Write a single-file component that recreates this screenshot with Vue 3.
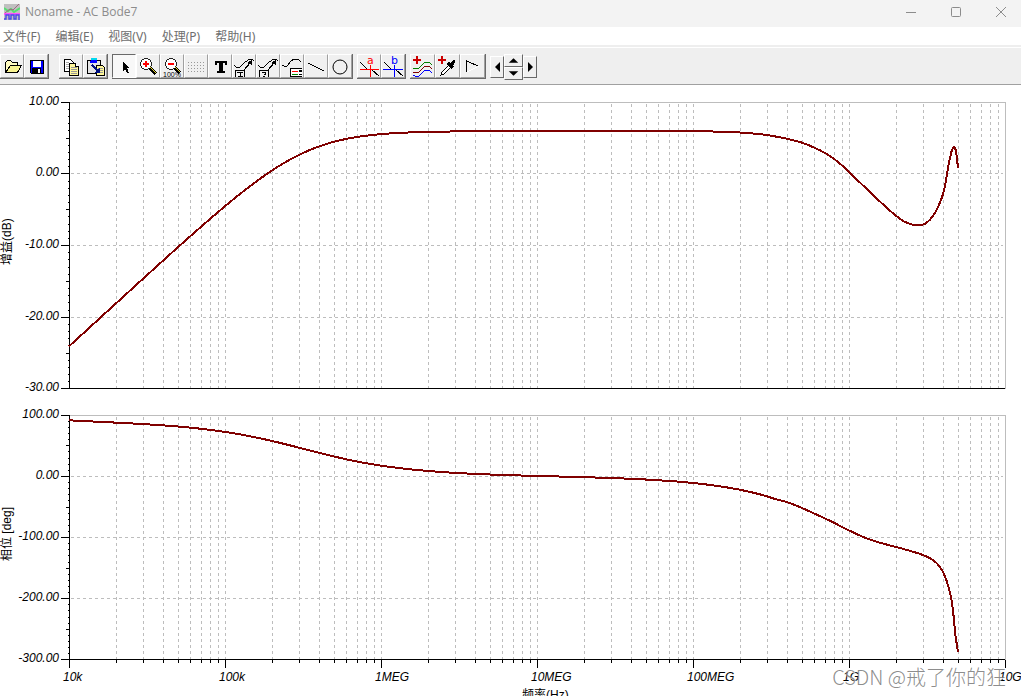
<script setup>
const menus = ['文件(F)', '编辑(E)', '视图(V)', '处理(P)', '帮助(H)']

const LEFT = 69
const RIGHT = 1005
const DECADE = 156
const decadeLabels = ['10k', '100k', '1MEG', '10MEG', '100MEG', '1G', '10G']

const decades = decadeLabels.map((label, i) => ({ label, x: LEFT + i * DECADE }))
const minorX = []
for (let d = 0; d < 6; d++) {
  for (let n = 2; n < 10; n++) {
    minorX.push(Math.round(LEFT + DECADE * (d + Math.log10(n))))
  }
}
const gridX = [...minorX, ...decades.slice(1, -1).map((d) => d.x)]

function makeAxis(top, bottom, max, step) {
  const labels = []
  const ticks = []
  for (let i = 0; i <= 40; i++) {
    const y = Math.round(top - 0.2 + ((bottom - top + 0.6) * i) / 40)
    const size = i % 10 === 0 ? 8 : i % 5 === 0 ? 3 : 1
    ticks.push({ y, size })
    if (i % 10 === 0) labels.push({ y, text: (max - (step * i) / 10).toFixed(2) })
  }
  return { top, bottom, labels, ticks }
}

function smooth(points) {
  let d = `M${points[0][0]} ${points[0][1]}`
  for (let i = 0; i < points.length - 1; i++) {
    const a = points[Math.max(i - 1, 0)]
    const b = points[i]
    const c = points[i + 1]
    const e = points[Math.min(i + 2, points.length - 1)]
    const slope = (p, q) => (q[1] - p[1]) / (q[0] - p[0])
    const h = (c[0] - b[0]) / 3
    const y1 = b[1] + slope(a, c) * h
    const y2 = c[1] - slope(b, e) * h
    d += `C${(b[0] + h).toFixed(1)} ${y1.toFixed(1)} ${(c[0] - h).toFixed(1)} ${y2.toFixed(1)} ${c[0]} ${c[1]}`
  }
  return d
}

// First-order high-pass section, then the sampled roll-off and resonance.
const gain = []
for (let x = LEFT; x <= 640; x += 12) {
  const f = 10 ** ((x - LEFT) / DECADE)
  const db = 6 - 10 * Math.log10(1 + (32 / f) ** 2)
  gain.push([x, 174 - db * 7.15])
}
gain.push(
  [660, 131.1], [700, 131.3], [730, 132], [750, 133.2], [765, 134.8], [780, 137.3], [788, 139],
  [802, 142.7], [814, 147.5], [826, 153.5], [835, 159.6], [842, 165.4], [849, 172.2], [857, 179.8],
  [867, 189.2], [877, 198.8], [887, 208], [896, 215.8], [904, 221.4], [912, 224.6], [917, 225.2],
  [923, 224.6], [928, 221.6], [933, 216], [937, 209], [941, 200], [944, 190], [946, 180],
  [948, 168], [950, 158], [952, 150], [954, 147], [956, 151], [957, 159], [958, 168]
)

// High-pass lead minus a constant delay, then the sampled tail.
const phase = []
for (let x = LEFT; x <= 780; x += 12) {
  const f = 10 ** ((x - LEFT) / DECADE)
  const lead = (Math.atan(32 / f) * 180) / Math.PI + 3.8 * Math.exp(-(x - LEFT) / 60)
  phase.push([x, 476.4 - (lead - f * 0.0011) * 0.61])
}
phase.push(
  [788, 502.4], [802, 508], [814, 513.4], [826, 519], [835, 523.2], [842, 527], [849, 530.4],
  [863, 536.9], [877, 541.9], [896, 547], [912, 551.4], [923, 555], [930, 558.2], [937, 563.4],
  [943, 572], [947, 582], [950, 593], [952, 603], [954, 620], [955, 632], [958, 652]
)

const plots = [
  { ...makeAxis(102, 388, 10, 10), curve: smooth(gain), title: '增益(dB)', titleY: 265 },
  { ...makeAxis(415, 659, 100, 100), curve: smooth(phase), title: '相位 [deg]', titleY: 561 }
]
const dotRows = [8, 11, 14, 17]
const dotCols = [4, 7, 10, 13, 16, 19]
</script>

<template>
  <div class="window">
    <header class="titlebar">
      <svg class="logo" width="16" height="16" viewBox="0 0 16 16" aria-hidden="true">
        <rect width="16" height="16" fill="#c0c0c0" />
        <path d="M0 10H16" stroke="#ff50ff" stroke-width="2" />
        <path d="M0 4L4 7L7 5L10 8L16 4" fill="none" stroke="#54e070" stroke-width="2" />
        <path d="M1 9L6 5L9 6L15 0" fill="none" stroke="#a06880" />
        <path d="M0 15H2V11H5V15H7V11H10V15H12V11H15V16" fill="none" stroke="#4848e8" stroke-width="1.4" />
      </svg>
      <h1>Noname - AC Bode7</h1>
      <div class="controls">
        <button aria-label="Minimize"><svg width="12" height="12" viewBox="0 0 12 12"><path d="M1 6.500H11" /></svg></button>
        <button aria-label="Maximize"><svg width="12" height="12" viewBox="0 0 12 12"><rect x="1.500" y="1.500" width="9" height="9" rx="1" /></svg></button>
        <button aria-label="Close"><svg width="12" height="12" viewBox="0 0 12 12"><path d="M1 1L11 11M11 1L1 11" /></svg></button>
      </div>
    </header>

    <nav class="menubar">
      <button v-for="m in menus" :key="m">{{ m }}</button>
    </nav>

    <div class="toolbar" role="toolbar">
      <div class="group">
        <button aria-label="Open">
          <svg viewBox="0 0 24 24">
            <path d="M5.500 18.500V8.500L7.500 6.500H10.500L12.500 8.500H17.500V11.500" fill="#fffbc0" stroke="#000" />
            <path d="M5.500 18.500L10.500 11.500H21.500L17.500 18.500Z" fill="#f8f390" stroke="#000" />
          </svg>
        </button>
        <button aria-label="Save">
          <svg viewBox="0 0 24 24">
            <path d="M6.500 6.500H19.500V19.500H7.500L6.500 18.500Z" fill="#00f" stroke="#000" />
            <rect x="9" y="7" width="8" height="6" fill="#fff" />
            <rect x="8" y="14" width="9" height="5" fill="#000" />
            <rect x="14" y="15" width="2" height="4" fill="#fff" />
          </svg>
        </button>
      </div>

      <div class="group">
        <button aria-label="Copy">
          <svg viewBox="0 0 24 24">
            <path d="M5.500 5.500H11.500L14.500 8.500V17.500H5.500Z" fill="#fff" stroke="#000" />
            <path d="M7 8.500H10M7 10.500H12M7 12.500H12M7 14.500H12" stroke="#aaa" />
            <path d="M10.500 9.500H16.500L19.500 12.500V21.500H10.500Z" fill="#fff79a" stroke="#000" />
            <path d="M16.500 9.500V12.500H19.500" fill="#fff" stroke="#000" />
            <path d="M12 13.500H18M12 15.500H18M12 17.500H18M12 19.500H18" stroke="#999" />
          </svg>
        </button>
        <button aria-label="Paste">
          <svg viewBox="0 0 24 24">
            <rect x="4.500" y="6.500" width="13" height="13" fill="#e4e4e4" stroke="#000" />
            <path d="M8 5H14V9H7V7H8Z" fill="#00f" /><rect x="8" y="4" width="6" height="2" fill="#00d8f0" />
            <path d="M13.500 11.500H19.500L21.500 13.500V21.500H13.500Z" fill="#fff79a" stroke="#000" />
            <path d="M15 14.500H20M15 16.500H20M15 18.500H20" stroke="#999" />
            <path d="M9 11L15 17" stroke="#001080" stroke-width="2" /><path d="M17 13V19H11Z" fill="#001080" />
          </svg>
        </button>
      </div>

      <div class="group">
        <button class="pressed" aria-label="Select" aria-pressed="true">
          <svg viewBox="0 0 24 24"><path d="M11 8V17L13 15L15 19H17L15 14H18Z" fill="#000" /></svg>
        </button>
        <button aria-label="Zoom in">
          <svg viewBox="0 0 24 24">
            <circle cx="10" cy="10" r="5.500" fill="#fff" stroke="#222" />
            <path d="M10 7V13M7 10H13" stroke="#f00" stroke-width="2" />
            <path d="M14 14L20 20" stroke="#000" stroke-width="3" /><path d="M14 13L20 19" stroke="#e8dc30" />
          </svg>
        </button>
        <button aria-label="Zoom 100%">
          <svg viewBox="0 0 24 24">
            <circle cx="11" cy="10" r="5.500" fill="#fff" stroke="#222" />
            <path d="M8 10H14" stroke="#f00" stroke-width="2" />
            <path d="M15 14L20 19" stroke="#000" stroke-width="3" /><path d="M15 13L20 18" stroke="#e8dc30" />
            <text x="3" y="23" class="tiny">100%</text>
          </svg>
        </button>
        <button aria-label="Grid">
          <svg viewBox="0 0 24 24">
            <template v-for="r in dotRows" :key="r">
              <rect v-for="c in dotCols" :key="c" :x="c" :y="r" width="1" height="1" fill="#999" />
            </template>
          </svg>
        </button>
        <button aria-label="Text">
          <svg viewBox="0 0 24 24"><path d="M7 7H19V11H17V9H15V17H17V19H9V17H11V9H9V11H7Z" fill="#000" /></svg>
        </button>
        <button aria-label="Text label">
          <svg viewBox="0 0 24 24">
            <path d="M2 11L4 13H8L13 8L18 5H20L22 7" fill="none" stroke="#000" />
            <path d="M3.500 23V16.500H12.500V23M11.500 16.500L19 8" fill="none" stroke="#000" />
            <path d="M20 6V11L15 9Z" fill="#000" />
            <path d="M5 18.500H11M8.500 18V22M6 22.500H11" stroke="#000" />
          </svg>
        </button>
        <button aria-label="Value label">
          <svg viewBox="0 0 24 24">
            <path d="M2 11L4 13H8L13 8L18 5H20L22 7" fill="none" stroke="#000" />
            <path d="M3.500 23V16.500H12.500V23M11.500 16.500L19 8" fill="none" stroke="#000" />
            <path d="M20 6V11L15 9Z" fill="#000" />
            <path d="M6 18.500H9.500V20.500H8M7 22.500H9" fill="none" stroke="#000" />
          </svg>
        </button>
        <button aria-label="Legend">
          <svg viewBox="0 0 24 24">
            <path d="M2 11L4 12H7L11 7L14 5H18L21 8" fill="none" stroke="#000" />
            <path d="M22 14.500H10.500V22.500H22" fill="#fff" stroke="#000" />
            <path d="M12 17.500H18" stroke="#f00" /><path d="M12 20.500H18" stroke="#080" />
            <path d="M19 16L22 18M22 16L19 18M19 20H22" stroke="#000" />
          </svg>
        </button>
        <button aria-label="Line">
          <svg viewBox="0 0 24 24"><path d="M4 9L20 17" stroke="#000" /></svg>
        </button>
        <button aria-label="Ellipse">
          <svg class="soft" viewBox="0 0 24 24"><circle cx="12" cy="13" r="7" fill="none" stroke="#000" /></svg>
        </button>
      </div>

      <div class="group">
        <button aria-label="Cursor a">
          <svg viewBox="0 0 24 24">
            <path d="M3 8L10 15M15 16L22 22" stroke="#000" />
            <path d="M3 15.500H22M13.500 11V23" stroke="#f00" /><text x="10" y="10" class="letter red">a</text>
          </svg>
        </button>
        <button aria-label="Cursor b">
          <svg viewBox="0 0 24 24">
            <path d="M3 8L10 15M15 16L22 22" stroke="#000" />
            <path d="M2 15.500H22M13.500 11V23" stroke="#00f" /><text x="10" y="10" class="letter blue">b</text>
          </svg>
        </button>
      </div>

      <div class="group wide">
        <button aria-label="Add curves">
          <svg viewBox="0 0 24 24">
            <path d="M3 14L5 15L9 14L14 9L17 8L19 8L22 11" fill="none" stroke="#008000" />
            <path d="M3 18L5 19L9 18L14 13L17 12L19 12L22 15" fill="none" stroke="#800000" />
            <path d="M3 21L5 22L9 22L14 17L17 16L19 16L22 19" fill="none" stroke="#00f" />
            <path d="M7 2V10M3 6H11" stroke="#c00" stroke-width="2" />
          </svg>
        </button>
        <button aria-label="Pick curve">
          <svg viewBox="0 0 24 24">
            <path d="M6 21L7 18L14 11L16 13L9 20Z" fill="#fff" stroke="#000" />
            <path d="M13 9L18 14M15 12L18 9" stroke="#000" stroke-width="3" /><path d="M16 8L18 6H20V9L17 11Z" fill="#000" />
            <path d="M7 2V10M3 6H11" stroke="#c00" stroke-width="2" />
          </svg>
        </button>
        <button aria-label="Marker">
          <svg viewBox="0 0 24 24">
            <path d="M7 18L19 12" stroke="#fff" /><path d="M6.500 18V7L18 12" fill="none" stroke="#000" />
          </svg>
        </button>
      </div>

      <div class="spinner">
        <button class="side" aria-label="Left"><svg viewBox="0 0 12 20"><path d="M9 5V15L4 10Z" /></svg></button>
        <div class="stack">
          <button aria-label="Up"><svg viewBox="0 0 18 11"><path d="M9 3L14 8H4Z" /></svg></button>
          <button aria-label="Down"><svg viewBox="0 0 18 11"><path d="M9 8L14 3H4Z" /></svg></button>
        </div>
        <button class="side" aria-label="Right"><svg viewBox="0 0 12 20"><path d="M4 5V15L9 10Z" /></svg></button>
      </div>
    </div>

    <main class="canvas">
      <svg class="charts" viewBox="0 85 1021 611" role="img" aria-label="Bode">
        <g v-for="p in plots" :key="p.title">
          <g class="grid">
            <path v-for="x in gridX" :key="x" :d="`M${x + 0.5} ${p.top + 2}V${p.bottom}`" />
            <path v-for="l in p.labels.slice(1, -1)" :key="l.y" :d="`M${LEFT + 2} ${l.y + 0.5}H${RIGHT - 2}`" />
          </g>
          <path class="frame" :d="`M${LEFT} ${p.top + 0.5}H${RIGHT + 0.5}V${p.bottom + 1}`" />
          <path class="axis" :d="`M${LEFT + 0.5} ${p.top}V${p.bottom + 0.5}H${RIGHT}`" />
          <path v-for="t in p.ticks" :key="t.y" class="axis" :d="`M${LEFT - t.size} ${t.y + 0.5}H${LEFT}`" />
          <path class="curve" :d="p.curve" />
          <text v-for="l in p.labels" :key="l.text" class="num end" x="59" :y="l.y + 3">{{ l.text }}</text>
          <text class="name" :transform="`translate(11 ${p.titleY}) rotate(-90)`">{{ p.title }}</text>
        </g>
        <path v-for="x in minorX" :key="x" class="axis" :d="`M${x + 0.5} 660V663`" />
        <path v-for="d in decades" :key="d.x" class="axis" :d="`M${d.x + 0.5} 660V668`" />
        <text v-for="d in decades" :key="d.label" class="num" :x="d.x - 6" y="681">{{ d.label }}</text>
        <text class="name" x="522" y="699">频率(Hz)</text>
      </svg>
      <span class="watermark">CSDN @戒了你的狂</span>
    </main>
  </div>
</template>

<style>
body {
  margin: 0;
  background: #fff;
  overflow: hidden;
}
</style>

<style scoped>
.window {
  font-family: "Noto Sans", "Noto Sans CJK SC", sans-serif;
  font-size: 12px;
  background: #fff;
}
button {
  margin: 0;
  padding: 0;
  border: 0;
  background: none;
  font: inherit;
  color: inherit;
}
.titlebar {
  display: flex;
  align-items: center;
  height: 27px;
  box-sizing: border-box;
  padding: 0 4px 4px;
  background: #f3f3f3;
  color: #8c8c8c;
}
.logo { margin-right: 5px; }
h1 {
  margin: 0;
  font-family: "Open Sans", sans-serif;
  font-size: 12px;
  font-weight: 400;
}
.controls {
  display: flex;
  margin-left: auto;
  margin-right: -6px;
}
.controls button {
  display: flex;
  justify-content: center;
  align-items: center;
  width: 45px;
  height: 23px;
}
.controls svg { fill: none; stroke: #8c8c8c; }
.menubar {
  display: flex;
  gap: 15px;
  height: 18px;
  padding-left: 3px;
  color: #6e6e6e;
  border-bottom: 2px solid #eee;
}
.menubar button { line-height: 20px; white-space: nowrap; }
.toolbar {
  display: flex;
  align-items: flex-start;
  gap: 4px;
  box-sizing: border-box;
  height: 38px;
  padding-top: 6px;
  border-top: 1px solid #fff;
  border-bottom: 1px solid #a0a0a0;
  background: #efefef;
}
.group {
  display: flex;
  border-right: 1px solid #696969;
  border-bottom: 1px solid #696969;
}
.group:first-child { margin-right: 6px; }
.group button, .spinner button {
  display: flex;
  box-sizing: border-box;
  border: 1px solid;
  border-color: #fff #a0a0a0 #a0a0a0 #fff;
  background: #f0f0f0;
}
.group button { width: 24px; height: 24px; }
.wide button { width: 25px; }
.group svg {
  flex: none;
  width: 24px;
  height: 24px;
  margin: -1px;
  shape-rendering: crispEdges;
}
.group .soft { shape-rendering: auto; }
.group .pressed {
  border-color: #696969 #fff #fff #696969;
  background: #f8f8f8;
}
.tiny { font: 7px "Liberation Sans", sans-serif; }
.letter { font: 11px "DejaVu Sans", sans-serif; }
.red { fill: #f00; }
.blue { fill: #00f; }
.spinner { display: flex; align-items: center; }
.spinner .side { width: 14px; height: 22px; }
.spinner .stack { width: 19px; }
.spinner .stack button { width: 100%; height: 13px; }
.spinner button { border-color: #fff #696969 #696969 #fff; }
.spinner svg { width: 100%; height: 100%; }
.canvas { position: relative; }
.charts { display: block; width: 100%; height: auto; }
.grid path, .frame, .axis, .curve { fill: none; shape-rendering: crispEdges; }
.grid path { stroke: #bdbdbd; stroke-dasharray: 3 3; }
.frame { stroke: #bdbdbd; }
.axis { stroke: #000; }
.curve { stroke: #800000; stroke-width: 2; }
.num { font: italic 12px "Liberation Sans", sans-serif; }
.end { text-anchor: end; }
.name { font: 12px "Liberation Sans", "Noto Sans CJK SC", sans-serif; }
.watermark {
  position: absolute;
  right: 15px;
  bottom: 5px;
  font: 20px/28px "Noto Sans CJK SC", sans-serif;
  font-weight: 300;
  color: rgba(120, 120, 120, 0.85);
  text-shadow: 1px 1px 1px #fff;
  white-space: nowrap;
}
</style>
